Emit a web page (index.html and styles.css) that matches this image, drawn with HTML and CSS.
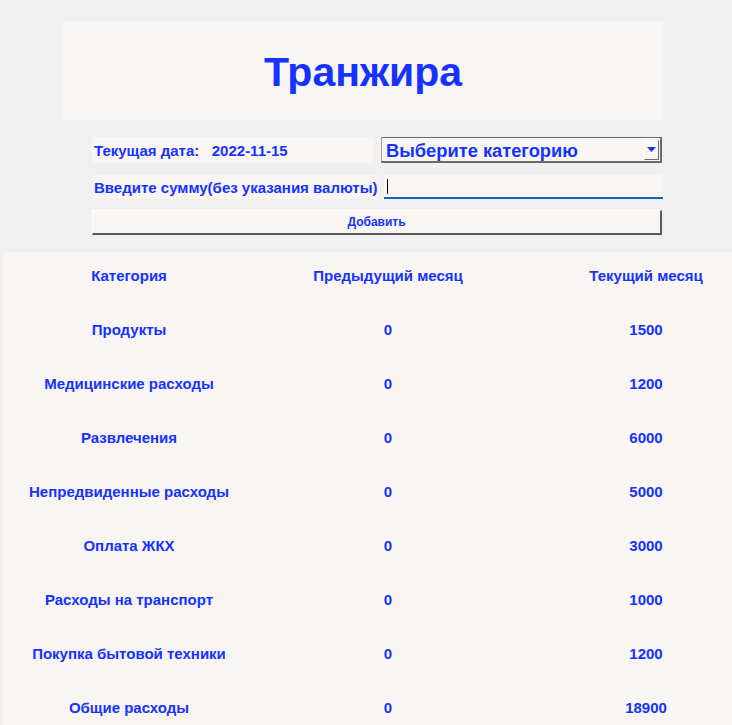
FILE: index.html
```html
<!DOCTYPE html>
<html lang="ru">
<head>
<meta charset="utf-8">
<title>Транжира</title>
<link rel="stylesheet" href="styles.css">
</head>
<body>
<div class="app">
  <header class="title-box"><h1 class="title">Транжира</h1></header>
  <section class="form">
    <div class="row row-date">
      <div class="label label-date">Текущая дата:&nbsp;&nbsp;&nbsp;2022-11-15</div>
      <div class="combo">
        <span class="combo-text">Выберите категорию</span>
        <span class="combo-btn"><svg width="9" height="5" viewBox="0 0 9 5"><path d="M0 0H9L4.5 5Z" fill="#1433ff"/></svg></span>
      </div>
    </div>
    <div class="row row-sum">
      <div class="label label-sum">Введите сумму(без указания валюты)</div>
      <div class="entry"><span class="caret"></span></div>
    </div>
    <button class="add-btn">Добавить</button>
  </section>
  <section class="table">
    <div class="cell head">Категория</div><div class="cell head">Предыдущий месяц</div><div class="cell head">Текущий месяц</div>
    <div class="cell">Продукты</div><div class="cell">0</div><div class="cell">1500</div>
    <div class="cell">Медицинские расходы</div><div class="cell">0</div><div class="cell">1200</div>
    <div class="cell">Развлечения</div><div class="cell">0</div><div class="cell">6000</div>
    <div class="cell">Непредвиденные расходы</div><div class="cell">0</div><div class="cell">5000</div>
    <div class="cell">Оплата ЖКХ</div><div class="cell">0</div><div class="cell">3000</div>
    <div class="cell">Расходы на транспорт</div><div class="cell">0</div><div class="cell">1000</div>
    <div class="cell">Покупка бытовой техники</div><div class="cell">0</div><div class="cell">1200</div>
    <div class="cell">Общие расходы</div><div class="cell">0</div><div class="cell">18900</div>
  </section>
</div>
</body>
</html>
```
FILE: styles.css
```css
* { box-sizing: border-box; }
html, body { margin: 0; padding: 0; }
body {
  background: #f0f0f0;
  font-family: "Liberation Sans", Arial, sans-serif;
  font-weight: bold;
  color: #1433ff;
  overflow: hidden;
  height: 725px;
}
.app { display: flex; flex-direction: column; }
.title-box {
  margin: 21px 0 0 63px;
  width: 600px;
  height: 99px;
  background: #f8f5f2;
  display: flex;
  align-items: center;
  justify-content: center;
}
.title {
  margin: 4px 0 0 0;
  font-size: 41px;
  line-height: 1;
  font-weight: bold;
}
.form {
  margin: 17px 0 0 92px;
  width: 571px;
  display: flex;
  flex-direction: column;
}
.row { display: flex; align-items: stretch; }
.row-date { height: 26px; gap: 7px; }
.row-sum { height: 24px; margin-top: 12px; gap: 6px; }
.label {
  background: #f8f5f2;
  font-size: 15px;
  display: flex;
  align-items: center;
  padding-left: 2px;
}
.label-date { width: 282px; }
.label-sum { width: 286px; }
.combo {
  flex: 1;
  background: #f8f5f2;
  border-top: 1px solid #6b6b6b;
  border-left: 1px solid #a0a0a0;
  border-right: 2px solid #6b6b6b;
  border-bottom: 2px solid #6b6b6b;
  display: flex;
  align-items: center;
  justify-content: space-between;
  padding: 2px 1px 0 4px;
  margin-right: 1px;
}
.combo-text { font-size: 18.3px; }
.combo-btn {
  width: 15px;
  height: 20px;
  margin-top: -2px;
  background: #f8f5f2;
  border-right: 1px solid #6b6b6b;
  border-bottom: 1px solid #6b6b6b;
  border-left: 1px solid #ffffff;
  border-top: 1px solid #ffffff;
  display: flex;
  align-items: center;
  justify-content: center;
}
.entry {
  flex: 1;
  background: #f8f5f2;
  border-bottom: 2px solid #0a64c8;
  display: flex;
  align-items: center;
  padding-left: 3px;
}
.caret { width: 1px; height: 15px; background: #000; }
.add-btn {
  margin-top: 11px;
  height: 25px;
  width: 570px;
  background: #f8f5f2;
  border-top: 1px solid #ffffff;
  border-left: 1px solid #ffffff;
  border-right: 2px solid #5a5a5a;
  border-bottom: 2px solid #5a5a5a;
  font-family: "Liberation Sans", Arial, sans-serif;
  font-weight: bold;
  font-size: 12px;
  color: #1433ff;
  padding: 0;
}
.table {
  margin: 17px 0 0 3px;
  background: #f8f5f2;
  flex: 1;
  height: 474px;
  display: grid;
  grid-template-columns: 252px 266px 250px;
  grid-template-rows: 51px;
  grid-auto-rows: 54px;
  overflow: hidden;
}
.cell {
  display: flex;
  align-items: center;
  justify-content: center;
  font-size: 15px;
  padding-bottom: 2px;
}
.head { padding-bottom: 5px; }
```
